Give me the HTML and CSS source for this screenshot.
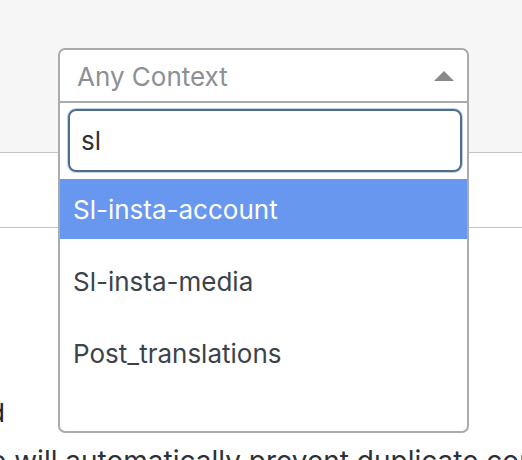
FILE: index.html
```html
<!DOCTYPE html>
<html>
<head>
<meta charset="utf-8">
<link rel="stylesheet" href="styles.css">
</head>
<body>
<div class="page">
  <div class="band-top"></div>
  <div class="band-mid"></div>
  <div class="content">
    <p class="label">d</p>
    <p class="desc">e will automatically prevent duplicate content</p>
  </div>

  <div class="select">
    <div class="selection">
      <span class="placeholder">Any Context</span>
      <span class="arrow"></span>
    </div>
    <div class="dropdown">
      <div class="search-wrap">
        <div class="search">sl</div>
      </div>
      <ul class="options">
        <li class="option active">Sl-insta-account</li>
        <li class="option">Sl-insta-media</li>
        <li class="option">Post_translations</li>
      </ul>
    </div>
  </div>
</div>
</body>
</html>
```

FILE: styles.css
```css
* { box-sizing: border-box; }
html, body { margin: 0; padding: 0; }
body {
  width: 522px;
  height: 460px;
  overflow: hidden;
  background: #ffffff;
  font-family: Inter, "Liberation Sans", Arial, sans-serif;
  font-size: 26px;
}
.page {
  position: relative;
  width: 522px;
  height: 460px;
  overflow: hidden;
}
.band-top {
  height: 153px;
  background: #f6f6f6;
  border-bottom: 1px solid #c3c4c7;
}
.band-mid {
  height: 75px;
  border-bottom: 1px solid #c3c4c7;
}
.content {
  padding-top: 169px;
  color: #1d2327;
}
.label {
  margin: 0 0 0 -11px;
  line-height: 32px;
  height: 32px;
}
.desc {
  margin: 16px 0 0 -10px;
  line-height: 32px;
  white-space: nowrap;
  font-size: 28px;
  color: #2c3338;
}

.select {
  position: absolute;
  left: 58px;
  top: 48px;
  width: 411px;
  height: 385px;
  border: 2px solid #a9abae;
  border-radius: 7px;
  background: #ffffff;
  display: flex;
  flex-direction: column;
}
.selection {
  height: 53px;
  border-bottom: 2px solid #a9abae;
  display: flex;
  align-items: center;
  justify-content: space-between;
  padding: 2px 13px 0 17px;
}
.placeholder {
  color: #8c8f94;
  line-height: 30px;
}
.arrow {
  width: 0;
  height: 0;
  border-left: 10px solid transparent;
  border-right: 10px solid transparent;
  border-bottom: 10px solid #8a8a8a;
  margin-top: -2px;
}
.dropdown {
  flex: 1;
  display: flex;
  flex-direction: column;
}
.search-wrap {
  padding: 6px 5px 7px 8px;
}
.search {
  height: 63px;
  border: 2px solid #4b6e91;
  border-radius: 8px;
  box-shadow: 0 0 0 1px #c9d2db;
  padding: 0 11px;
  display: flex;
  align-items: center;
  color: #2c3338;
}
.options {
  list-style: none;
  margin: 0;
  padding: 0;
  display: flex;
  flex-direction: column;
  gap: 12px;
}
.option {
  height: 60px;
  display: flex;
  align-items: center;
  padding-left: 13px;
  color: #3c434a;
}
.option.active {
  background: #6897f0;
  color: #ffffff;
}
```
